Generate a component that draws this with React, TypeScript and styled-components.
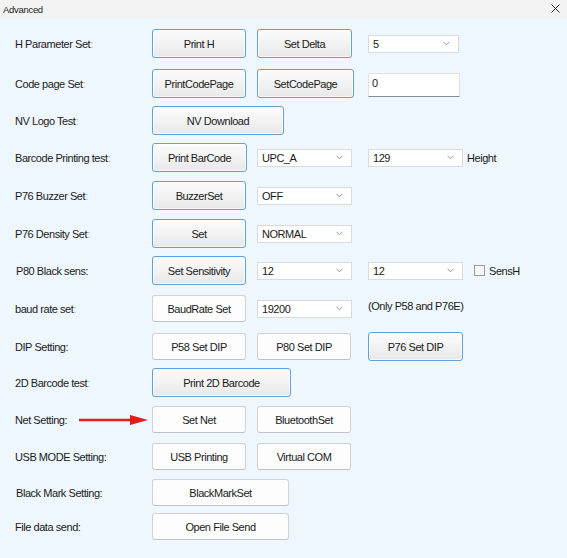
import * as React from "react"
import styled, { createGlobalStyle, css } from "styled-components"

const GlobalStyle = createGlobalStyle`
  html, body {
    margin: 0;
    padding: 0;
    background: #eef6fe;
  }
  body {
    font-family: "Liberation Sans", Arial, sans-serif;
    color: #1b1b1b;
  }
`

const Window = styled.div`
  width: 567px;
  height: 558px;
  display: flex;
  flex-direction: column;
  overflow: hidden;
`

const TitleBar = styled.div`
  height: 18px;
  flex: none;
  display: flex;
  align-items: center;
  justify-content: space-between;
  padding: 0 7px 0 3px;
  background: #f3f3f3;
  font-size: 9.5px;
  letter-spacing: -0.3px;
  color: #1a1a1a;
`

const CloseIcon = styled.svg`
  width: 9px;
  height: 9px;
  margin-top: -1px;
`

const Body = styled.div`
  flex: 1;
  display: flex;
  flex-direction: column;
  background: #eef6fe;
  font-size: 11px;
  letter-spacing: -0.45px;
`

const Row = styled.div<{ $gap: number }>`
  display: grid;
  grid-template-columns: 137px 105px 111px 1fr;
  align-items: center;
  height: 29px;
  margin-top: ${(p) => p.$gap}px;
  padding-left: 15px;
`

const Label = styled.div<{ $indent?: boolean }>`
  display: flex;
  align-items: center;
  padding-left: ${(p) => (p.$indent ? 1 : 0)}px;
  white-space: nowrap;
`

// faint trailing colon, as the original dialog renders it
const Faint = styled.span`
  color: #a9b0b8;
`

const Button = styled.div<{ $focus?: boolean; $w?: number; $wide?: boolean }>`
  box-sizing: border-box;
  width: ${(p) => p.$w ?? 94}px;
  height: ${(p) => (p.$focus ? 29 : 27)}px;
  display: flex;
  align-items: center;
  justify-content: center;
  border-radius: 3px;
  color: #1a1a1a;
  white-space: nowrap;
  ${(p) => p.$wide && "grid-column: span 2;"}
  ${(p) =>
    p.$focus
      ? css`
          border: 1px solid #62a0d9;
          background: linear-gradient(#fcfcfc, #e8e8e8);
          box-shadow: inset 0 0 0 1px rgba(255, 255, 255, 0.7);
        `
      : css`
          border: 1px solid #d2d2d2;
          border-bottom-color: #c2c2c2;
          background: #fdfdfd;
        `}
`

const Combo = styled.div<{ $w: number }>`
  box-sizing: border-box;
  width: ${(p) => p.$w}px;
  height: 18px;
  display: flex;
  align-items: center;
  justify-content: space-between;
  padding: 0 8px 0 4px;
  background: #fff;
  border: 1px solid #dadada;
  color: #1a1a1a;
`

const Chevron = styled.svg`
  width: 7px;
  height: 5px;
`

const TextBox = styled.div`
  box-sizing: border-box;
  width: 92px;
  height: 24px;
  padding: 3px 0 0 3px;
  background: #fff;
  border: 1px solid #e2e2e2;
  border-bottom-color: #8c8c8c;
  align-self: center;
  margin-top: 3px;
`

const Cell = styled.div`
  display: flex;
  align-items: center;
  gap: 4px;
  white-space: nowrap;
`

const CheckBox = styled.span`
  box-sizing: border-box;
  width: 11px;
  height: 11px;
  margin-left: 7px;
  border: 1px solid #9a9a9a;
  background: #f8f8f8;
`

const Hint = styled.span`
  margin-top: -5px;
  white-space: nowrap;
`

const Arrow = styled.svg`
  width: 69px;
  height: 12px;
  margin-left: 12px;
  flex: none;
`

const Select = ({ w, value }: { w: number; value: string }) => (
  <Combo $w={w}>
    <span>{value}</span>
    <Chevron viewBox="0 0 7 5">
      <path d="M0.5 0.8 L3.5 3.8 L6.5 0.8" fill="none" stroke="#8a8a8a" strokeWidth="0.9" />
    </Chevron>
  </Combo>
)

const App = () => (
  <Window>
    <GlobalStyle />
    <TitleBar>
      <span>Advanced</span>
      <CloseIcon viewBox="0 0 9 9">
        <path d="M0.5 0.5 L8.5 8.5 M8.5 0.5 L0.5 8.5" stroke="#2a2a2a" strokeWidth="1" />
      </CloseIcon>
    </TitleBar>
    <Body>
      <Row $gap={11}>
        <Label>H Parameter Set<Faint>:</Faint></Label>
        <Button $focus>Print H</Button>
        <Button $focus $w={95}>Set Delta</Button>
        <Select w={91} value="5" />
      </Row>
      <Row $gap={11}>
        <Label>Code page Set<Faint>:</Faint></Label>
        <Button $focus>PrintCodePage</Button>
        <Button $focus $w={97}>SetCodePage</Button>
        <TextBox>0</TextBox>
      </Row>
      <Row $gap={8}>
        <Label>NV Logo Test<Faint>:</Faint></Label>
        <Button $focus $wide $w={132}>NV Download</Button>
      </Row>
      <Row $gap={8}>
        <Label>Barcode Printing test<Faint>:</Faint></Label>
        <Button $focus $w={95}>Print BarCode</Button>
        <Select w={95} value="UPC_A" />
        <Cell>
          <Select w={95} value="129" />
          Height
        </Cell>
      </Row>
      <Row $gap={9}>
        <Label>P76 Buzzer Set<Faint>:</Faint></Label>
        <Button $focus>BuzzerSet</Button>
        <Select w={95} value="OFF" />
      </Row>
      <Row $gap={9}>
        <Label>P76 Density Set<Faint>:</Faint></Label>
        <Button $focus>Set</Button>
        <Select w={95} value="NORMAL" />
      </Row>
      <Row $gap={8}>
        <Label $indent>P80 Black sens:</Label>
        <Button $focus>Set Sensitivity</Button>
        <Select w={95} value="12" />
        <Cell>
          <Select w={95} value="12" />
          <CheckBox />
          SensH
        </Cell>
      </Row>
      <Row $gap={9}>
        <Label>baud rate set<Faint>:</Faint></Label>
        <Button>BaudRate Set</Button>
        <Select w={95} value="19200" />
        <Hint>(Only P58 and P76E)</Hint>
      </Row>
      <Row $gap={9}>
        <Label>DIP Setting:</Label>
        <Button>P58 Set DIP</Button>
        <Button>P80 Set DIP</Button>
        <Button $focus $w={95}>P76 Set DIP</Button>
      </Row>
      <Row $gap={7}>
        <Label>2D Barcode test<Faint>:</Faint></Label>
        <Button $focus $wide $w={139}>Print 2D Barcode</Button>
      </Row>
      <Row $gap={8}>
        <Label>
          Net Setting:
          <Arrow viewBox="0 0 69 12">
            <path d="M0 6 L53 6" stroke="#e31b1b" strokeWidth="2.6" />
            <path d="M51 1 L69 6 L51 11 Z" fill="#e31b1b" />
          </Arrow>
        </Label>
        <Button>Set Net</Button>
        <Button>BluetoothSet</Button>
      </Row>
      <Row $gap={8}>
        <Label>USB MODE Setting:</Label>
        <Button>USB Printing</Button>
        <Button>Virtual COM</Button>
      </Row>
      <Row $gap={7}>
        <Label $indent>Black Mark Setting:</Label>
        <Button $wide $w={137}>BlackMarkSet</Button>
      </Row>
      <Row $gap={5}>
        <Label>File data send:</Label>
        <Button $wide $w={137}>Open File Send</Button>
      </Row>
    </Body>
  </Window>
)

export default App
